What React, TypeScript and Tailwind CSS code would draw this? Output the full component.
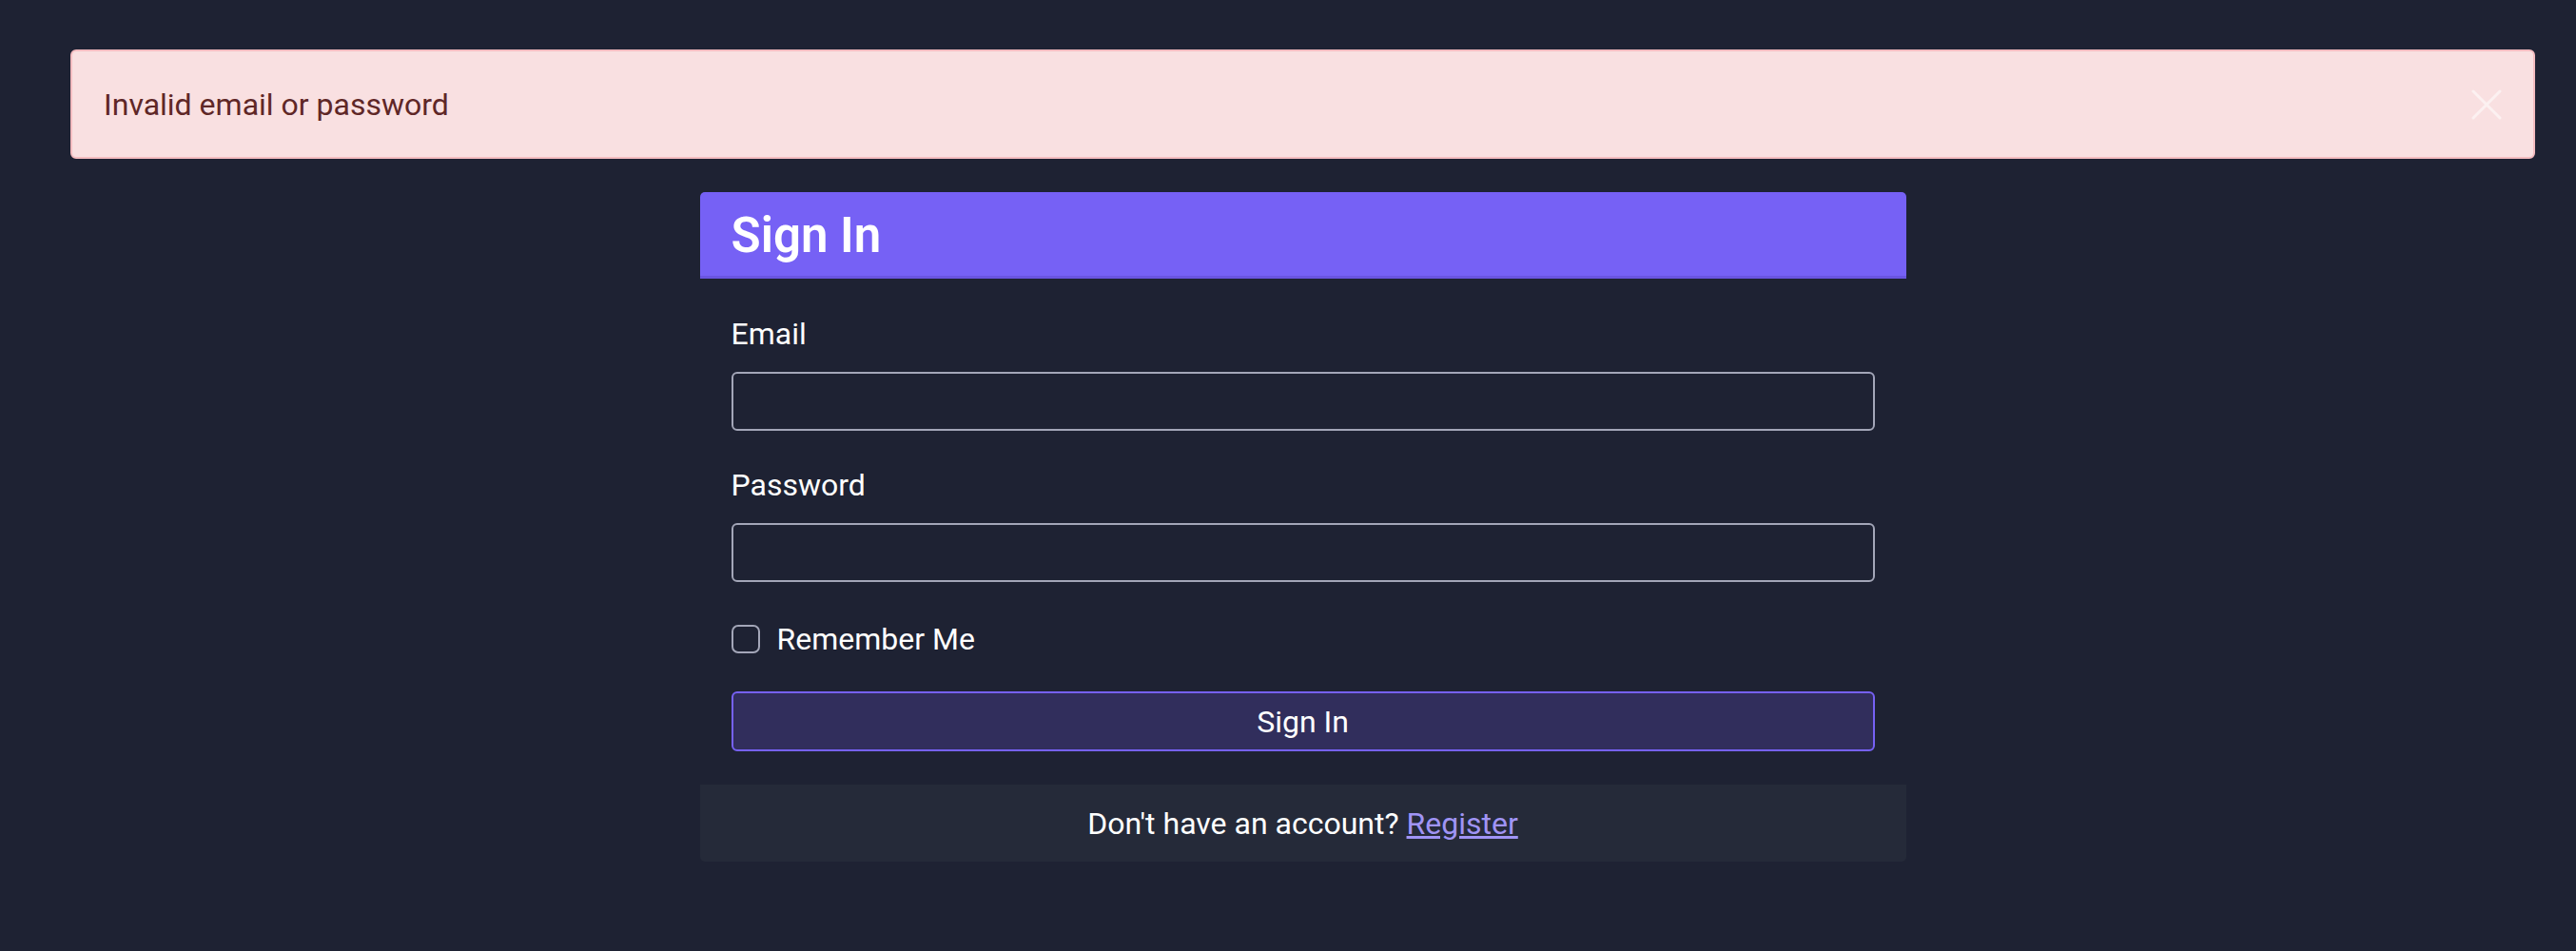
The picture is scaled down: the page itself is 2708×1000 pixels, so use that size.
import React from "react";

const font = { fontFamily: "Roboto, 'Noto Sans', sans-serif" };

const Field: React.FC<{ label: string; type: string; last?: boolean }> = ({ label, type, last }) => (
  <div className={last ? "mb-[38px]" : "mb-[35px]"}>
    <label className="block text-[32px] leading-[44px] text-white mb-[18px]">{label}</label>
    <input
      type={type}
      className="block w-full h-[62px] rounded-[6px] border-2 border-[#a3a6b8] bg-transparent px-4 text-white outline-none"
    />
  </div>
);

export default function App() {
  return (
    <div className="min-h-screen bg-[#1e2233] pt-[52px] pl-[74px] pr-[43px]" style={font}>
      <div className="h-[115px] flex items-center justify-between rounded-[6px] border-2 border-[#f4bcc0] bg-[#f9e0e1] pl-[33px] pr-[33px]">
        <span className="text-[32px] text-[#5f2727]">Invalid email or password</span>
        <button aria-label="Close" className="w-[32px] h-[32px] flex items-center justify-center">
          <svg width="32" height="32" viewBox="0 0 32 32" fill="none">
            <path d="M2 2L30 30M30 2L2 30" stroke="white" strokeOpacity="0.55" strokeWidth="3" strokeLinecap="round" />
          </svg>
        </button>
      </div>

      <div className="mx-auto mt-[35px] w-[1268px]">
        <div className="h-[91px] flex items-center rounded-t-[5px] bg-[#7661f5] border-b-[3px] border-[#6a55e0] px-[33px] pt-[5px]">
          <h1 className="text-[51px] font-semibold text-white">Sign In</h1>
        </div>
        <div className="px-[33px] pt-[36px] pb-[35px]">
          <Field label="Email" type="email" />
          <Field label="Password" type="password" last />
          <div className="h-[44px] flex items-center gap-[18px] mb-[33px]">
            <span className="w-[30px] h-[30px] rounded-[7px] border-2 border-[#a3a6b8]" />
            <span className="text-[32px] text-white">Remember Me</span>
          </div>
          <button className="w-full h-[63px] rounded-[6px] border-2 border-[#7661f5] bg-[#312e5c] text-[32px] text-white">
            Sign In
          </button>
        </div>
        <div className="h-[81px] flex items-center justify-center rounded-b-[5px] bg-[#252a39] text-[32px] text-white">
          <span>
            Don't have an account?{" "}
            <a href="#" className="text-[#a094f5] underline">
              Register
            </a>
          </span>
        </div>
      </div>
    </div>
  );
}
